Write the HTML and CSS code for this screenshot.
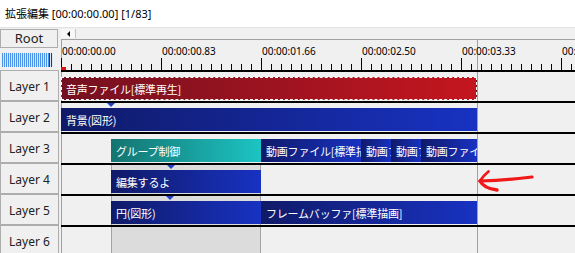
FILE: index.html
```html
<!DOCTYPE html>
<html lang="ja">
<head>
<meta charset="utf-8">
<title>拡張編集</title>
<link rel="stylesheet" href="styles.css">
</head>
<body>
<div class="title">拡張編集 [00:00:00.00] [1/83]</div>
<div class="editor">
  <aside class="side">
    <div class="root">Root</div>
    <div class="meter"></div>
    <div class="layer">Layer 1</div>
    <div class="layer">Layer 2</div>
    <div class="layer">Layer 3</div>
    <div class="layer">Layer 4</div>
    <div class="layer">Layer 5</div>
    <div class="layer">Layer 6</div>
  </aside>
  <section class="timeline">
    <div class="scroll"><span class="scroll-btn"></span></div>
    <div class="ruler">
      <span>00:00:00.00</span>
      <span>00:00:00.83</span>
      <span>00:00:01.66</span>
      <span>00:00:02.50</span>
      <span>00:00:03.33</span>
      <span>00:00:04.16</span>
    </div>
    <div class="track">
      <div class="clip red" style="width:416px">音声ファイル[標準再生]</div>
    </div>
    <div class="track">
      <span class="mark" style="left:46px"></span>
      <div class="clip blue" style="width:416px">背景(図形)</div>
    </div>
    <div class="track">
      <div class="clip teal" style="margin-left:50px;width:150px">グループ制御</div>
      <div class="clip blue" style="width:100px">動画ファイル[標準描画]</div>
      <div class="clip blue" style="width:30px">動画ファイル</div>
      <div class="clip blue" style="width:30px">動画ファイル</div>
      <div class="clip blue" style="width:56px">動画ファイル[標準描画]</div>
    </div>
    <div class="track scoped">
      <span class="mark" style="left:106px"></span>
      <div class="clip blue" style="margin-left:50px;width:150px">編集するよ</div>
    </div>
    <div class="track scoped">
      <span class="mark" style="left:105px"></span>
      <div class="clip blue" style="margin-left:50px;width:150px">円(図形)</div>
      <div class="clip blue" style="width:216px">フレームバッファ[標準描画]</div>
    </div>
    <div class="track scoped"></div>
    <svg class="annot" width="62" height="26" viewBox="0 0 62 26">
      <path d="M5 13 Q 30 12.5 57 9" fill="none" stroke="#f01818" stroke-width="3.2" stroke-linecap="round"/>
      <path d="M5 13 Q 8 8 13.5 3.5" fill="none" stroke="#f01818" stroke-width="2.8" stroke-linecap="round"/>
      <path d="M5 13 Q 9 20.5 22 22" fill="none" stroke="#f01818" stroke-width="3.4" stroke-linecap="round"/>
    </svg>
  </section>
</div>
</body>
</html>
```
FILE: styles.css
```css
* { box-sizing: border-box; }
html, body { margin: 0; overflow: hidden; }
body {
  width: 575px;
  height: 253px;
  background: #f0f0f0;
  font-family: "Noto Sans", "Noto Sans CJK JP", sans-serif;
  color: #000;
}
.title {
  height: 28px;
  background: #fff;
  border-bottom: 1px solid #e3e3e3;
  padding-left: 5px;
  font-size: 11px;
  line-height: 27px;
}
.editor {
  display: grid;
  grid-template-columns: 61px 514px;
}
.side {
  display: flex;
  flex-direction: column;
}
.root {
  margin: 1px 3px 0 0;
  height: 19px;
  border: 1px solid #adadad;
  text-align: center;
  font-size: 13px;
  line-height: 17px;
  color: #222;
}
.meter {
  margin: 5px 8px 3px 2px;
  height: 14px;
  background:
    repeating-linear-gradient(to right, #1c3a8e 0 1px, #dfe7f3 1px 2px) right top / 4px 100% no-repeat,
    repeating-linear-gradient(to right, #4c92e8 0 1px, #d8e7fa 1px 2px);
}
.layer {
  height: 31px;
  margin-right: 2px;
  border: 1px solid #adadad;
  display: flex;
  align-items: center;
  justify-content: center;
  padding-top: 2px;
  font-size: 12px;
  color: #222;
}
.timeline {
  position: relative;
  overflow: hidden;
  background:
    linear-gradient(#18dce4, #18dce4) 0 12px / 1px 100% no-repeat,
    linear-gradient(#a0a0a0, #a0a0a0) 416px 12px / 1px 100% no-repeat,
    #f0f0f0;
}
.scroll {
  height: 12px;
  padding-top: 1px;
  border-bottom: 1px solid #a0a0a0;
  display: flex;
}
.scroll-btn {
  width: 15px;
  height: 9px;
  background: #f7f7f7;
  border-right: 1px solid #c4c4c4;
  display: flex;
  align-items: center;
  justify-content: center;
}
.scroll-btn::before {
  content: "";
  border-top: 3px solid transparent;
  border-bottom: 3px solid transparent;
  border-right: 3px solid #000;
}
.ruler {
  position: relative;
  height: 30px;
  display: flex;
  overflow: hidden;
  background:
    repeating-linear-gradient(to right, #000 0 1px, transparent 1px 100px) left bottom / 100% 12px no-repeat,
    repeating-linear-gradient(to right, #000 0 1px, transparent 1px 10px) left bottom / 100% 6px no-repeat;
}
.ruler span {
  flex: none;
  width: 100px;
  padding: 4px 0 0 1px;
  font-size: 10px;
  line-height: 14px;
  color: #000;
}
.ruler::after {
  content: "";
  position: absolute;
  left: 0;
  bottom: 0;
  width: 5px;
  height: 3px;
  background: #e01010;
}
.track {
  position: relative;
  height: 31px;
  border-top: 2px solid #000;
  padding-top: 5px;
  display: flex;
}
.scoped {
  background: linear-gradient(to right,
    transparent 50px, #a4a4a4 50px 51px, #dcdcdc 51px 199px,
    #a4a4a4 199px 200px, transparent 200px);
}
.mark {
  position: absolute;
  top: 0;
  width: 1px;
  height: 0;
  border-left: 4px solid transparent;
  border-right: 4px solid transparent;
  border-top: 4px solid #2040c8;
}
.clip {
  flex: none;
  height: 23px;
  padding-left: 5px;
  overflow: hidden;
  white-space: nowrap;
  font-family: "Noto Sans CJK JP", sans-serif;
  font-size: 11px;
  line-height: 24px;
  letter-spacing: -0.2px;
  color: #fff;
}
.red {
  background: linear-gradient(to right, #741020, #c4161f);
  border: 1px dashed #fff;
  padding-left: 4px;
  line-height: 22px;
}
.blue {
  background: linear-gradient(to right, #101a68, #1832c2);
}
.teal {
  background: linear-gradient(to right, #147470, #1cc4c4);
}
.annot {
  position: absolute;
  left: 414px;
  top: 140px;
}
```
